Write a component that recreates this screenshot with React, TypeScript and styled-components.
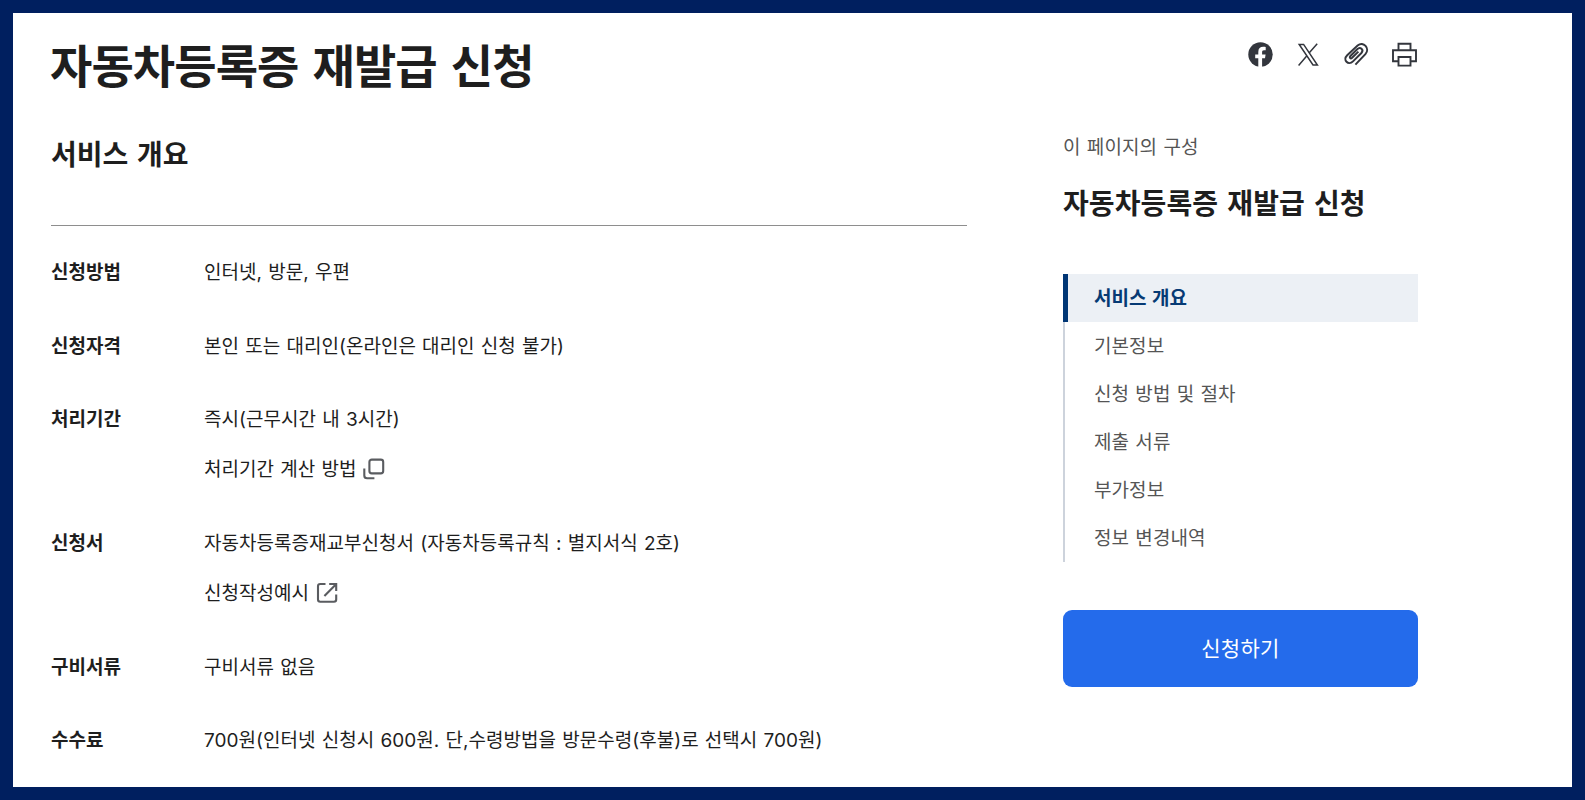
import styled, { createGlobalStyle } from "styled-components"

const GlobalStyle = createGlobalStyle`
  *{
    box-sizing:border-box;
  }
  body{
    margin:0;
    font-family:Inter, "Noto Sans CJK KR", sans-serif;
    color:#1e1e1e;
  }
`
const Frame = styled.div`
  height:800px;
  border:13px solid #001f5f;
  background-color:#fff;
  display:flex;
  padding:0 154px 0 38px;
  justify-content:space-between;
`
const Content = styled.main`
  width:916px;
`
const Title = styled.h1`
  margin:21px 0 0 -1px;
  height:64px;
  line-height:64px;
  font-size:46px;
  font-weight:700;
  letter-spacing:-0.9px;
  word-spacing:4px;
  white-space:nowrap;
`
const SectionTitle = styled.h2`
  margin:36px 0 0;
  padding-bottom:49px;
  line-height:42px;
  font-size:28px;
  font-weight:700;
  word-spacing:2px;
  border-bottom:1px solid #8e8e8e;
`
const List = styled.dl`
  margin:32px 0 0;
  display:flex;
  flex-direction:column;
  gap:43.7px;
`
const Row = styled.div`
  display:flex;
  font-size:19px;
  line-height:30px;
`
const Term = styled.dt`
  width:153px;
  font-weight:700;
`
const Detail = styled.dd`
  margin:0;
  display:flex;
  flex-direction:column;
  gap:20px;
  letter-spacing:0.03px;
  word-spacing:0.8px;
  white-space:nowrap;
`
const DetailLink = styled.a`
  display:flex;
  align-items:center;
  gap:7px;
  svg{
    margin-bottom:2px;
  }
`
const Side = styled.aside`
  width:355px;
`
const ShareList = styled.div`
  margin-top:28px;
  display:flex;
  justify-content:flex-end;
  gap:20px;
  svg{
    display:block;
  }
`
const SideLabel = styled.p`
  margin:64px 0 0;
  line-height:30px;
  font-size:19px;
  letter-spacing:0.1px;
  word-spacing:0.8px;
  color:#555;
`
const SideTitle = styled.h3`
  margin:20px 0 0;
  line-height:42px;
  font-size:28px;
  font-weight:700;
  letter-spacing:0.1px;
  word-spacing:2.4px;
  white-space:nowrap;
`
const Menu = styled.nav`
  margin-top:49px;
`
const MenuItem = styled.a<{ $active?: boolean }>`
  display:block;
  height:48px;
  line-height:50px;
  font-size:19px;
  letter-spacing:0.08px;
  word-spacing:0.8px;
  color:${(p) => (p.$active ? "#063a74" : "#555")};
  font-weight:${(p) => (p.$active ? 700 : 400)};
  background-color:${(p) => (p.$active ? "#ecf0f5" : "transparent")};
  border-left:${(p) => (p.$active ? "5px solid #003675" : "2px solid #cdd3dc")};
  padding-left:${(p) => (p.$active ? "26px" : "29px")};
`
const ApplyButton = styled.button`
  margin-top:48px;
  width:100%;
  height:77px;
  padding:0 0 3px;
  border:none;
  border-radius:9px;
  background-color:#246beb;
  color:#fff;
  font-family:inherit;
  font-size:21px;
  letter-spacing:0.3px;
`

const FacebookIcon = () => (
  <svg width="28" height="28" viewBox="0 0 28 28">
    <circle cx="14.5" cy="13.5" r="12.2" fill="#33363d" />
    <path
      d="M12.3 26V17.2H9.2V13.5H12.3V10.9C12.3 7.5 14.2 5.8 17.2 5.8C18.3 5.8 19.2 5.9 19.7 6V9.3H18C16.5 9.3 16.1 10.1 16.1 11.2V13.5H19.6L19 17.2H16.1V26Z"
      fill="#fff"
    />
  </svg>
)

const XIcon = () => (
  <svg width="28" height="28" viewBox="0 0 28 28" fill="none" stroke="#33363d" strokeWidth="1.5">
    <path d="M5.2 3.4H9.6L23.4 24H19Z" />
    <path d="M23.2 2.8L15.3 11.7M12.7 15.1L4.6 24.4" />
  </svg>
)

const ClipIcon = () => (
  <svg width="28" height="28" viewBox="0 0 28 28" fill="none" stroke="#33363d" strokeWidth="2">
    <path d="M13.4 23.6L23.4 13.2C28.4 7.4 21.4 -0.2 15.6 4.6L5.2 14.2C0.3 19 6.3 24.9 11 20.4L19.4 12C22.2 8.8 18.3 5.3 15.2 8.2L8.4 15C6.9 16.7 8.6 18.2 10.1 16.8L16.4 10.6" />
  </svg>
)

const PrintIcon = () => (
  <svg width="28" height="28" viewBox="0 0 28 28" fill="none" stroke="#33363d" strokeWidth="1.9">
    <path d="M8.5 9V2.7H20.5V9M8.5 20.2H3V9.2H26V20.2H20.5M8.5 16H20.5V24.6H8.5Z" />
  </svg>
)

const CopyIcon = () => (
  <svg width="22" height="22" viewBox="0 0 22 22" fill="none" stroke="#5a5c60" strokeWidth="2.1">
    <rect x="6.4" y="1.6" width="13.8" height="13.8" rx="2.4" />
    <path d="M1.3 10.4V17.4Q1.3 20.2 4.1 20.2H11.4" />
  </svg>
)

const OpenIcon = () => (
  <svg width="22" height="22" viewBox="0 0 22 22" fill="none" stroke="#5a5c60" strokeWidth="2.1">
    <path d="M9.5 2H4.2Q2 2 2 4.2V17.6Q2 19.8 4.2 19.8H18Q20.2 19.8 20.2 17.6V12.4M13.2 2H20.2V9M19.8 2.4L8.4 14" />
  </svg>
)

const rows = [
  { term: "신청방법", text: "인터넷, 방문, 우편" },
  { term: "신청자격", text: "본인 또는 대리인(온라인은 대리인 신청 불가)" },
  { term: "처리기간", text: "즉시(근무시간 내 3시간)", link: "처리기간 계산 방법", icon: <CopyIcon /> },
  {
    term: "신청서",
    text: "자동차등록증재교부신청서 (자동차등록규칙 : 별지서식 2호)",
    link: "신청작성예시",
    icon: <OpenIcon />,
  },
  { term: "구비서류", text: "구비서류 없음" },
  { term: "수수료", text: "700원(인터넷 신청시 600원. 단,수령방법을 방문수령(후불)로 선택시 700원)" },
]

const menu = ["서비스 개요", "기본정보", "신청 방법 및 절차", "제출 서류", "부가정보", "정보 변경내역"]

const App = () => {
  return (
    <>
      <GlobalStyle />
      <Frame>
        <Content>
          <Title>자동차등록증 재발급 신청</Title>
          <SectionTitle>서비스 개요</SectionTitle>
          <List>
            {rows.map((row) => (
              <Row key={row.term}>
                <Term>{row.term}</Term>
                <Detail>
                  <span>{row.text}</span>
                  {row.link && (
                    <DetailLink>
                      {row.link}
                      {row.icon}
                    </DetailLink>
                  )}
                </Detail>
              </Row>
            ))}
          </List>
        </Content>
        <Side>
          <ShareList>
            <FacebookIcon />
            <XIcon />
            <ClipIcon />
            <PrintIcon />
          </ShareList>
          <SideLabel>이 페이지의 구성</SideLabel>
          <SideTitle>자동차등록증 재발급 신청</SideTitle>
          <Menu>
            {menu.map((item, i) => (
              <MenuItem key={item} $active={i === 0}>
                {item}
              </MenuItem>
            ))}
          </Menu>
          <ApplyButton>신청하기</ApplyButton>
        </Side>
      </Frame>
    </>
  )
}

export default App
